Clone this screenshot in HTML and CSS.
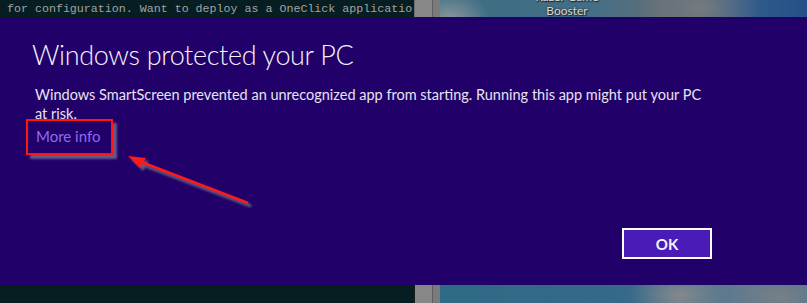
FILE: index.html
```html
<!DOCTYPE html>
<html>
  <head>
    <meta charset="UTF-8">
    <title>Windows protected your PC</title>
    <link rel="stylesheet" href="styles.css">
  </head>
  <body>
    <!-- Terminal + desktop peeking out above the dialog -->
    <div class="strip strip-top">
      <div class="term"><span>for configuration. Want to deploy as a OneClick applicatio</span></div>
      <div class="scroll"><div class="scroll-thumb"></div></div>
      <div class="desktop desktop-top">
        <div class="icon-label">Razer Game<br>Booster</div>
      </div>
    </div>

    <!-- SmartScreen dialog band -->
    <div class="dialog">
      <h1 class="title">Windows protected your PC</h1>
      <p class="message">Windows SmartScreen prevented an unrecognized app from starting. Running this app might put your PC at risk.</p>
      <div class="more-row">
        <a class="more-info" href="#">More info</a>
      </div>
      <div class="actions">
        <button class="ok-btn">OK</button>
      </div>

      <!-- Red annotation arrow -->
      <svg class="arrow" width="807" height="268" viewBox="0 0 807 268">
        <defs>
          <filter id="soft" x="-10%" y="-10%" width="120%" height="120%">
            <feGaussianBlur stdDeviation="1"/>
          </filter>
        </defs>
        <g filter="url(#soft)" fill="#5f5c82" stroke="#5f5c82">
          <line x1="251" y1="189" x2="138" y2="146" stroke-width="3"/>
          <polygon points="131,142 149,144 143,154" stroke="none"/>
        </g>
        <g fill="#ff1a1a" stroke="#ff1a1a">
          <line x1="248" y1="186" x2="136" y2="143" stroke-width="2.5"/>
          <polygon points="128,139 146,141 140,151" stroke="none"/>
        </g>
      </svg>
    </div>

    <div class="strip strip-bottom">
      <div class="term"></div>
      <div class="scroll"><div class="scroll-thumb"></div></div>
      <div class="desktop desktop-bottom"></div>
    </div>
  </body>
</html>
```

FILE: styles.css
```css
body {
  margin: 0;
  width: 807px;
  height: 303px;
  overflow: hidden;
  background-color: #220069;
  font-family: Lato, "Open Sans", sans-serif;
}

/* ---- strips above / below the dialog ---- */
.strip {
  display: flex;
  overflow: hidden;
}
.strip-top {
  height: 17px;
}
.strip-bottom {
  height: 18px;
}
.term {
  width: 414px;
  background-color: #061e22;
  color: #a2a4a4;
  font-family: "Liberation Mono", monospace;
  font-size: 11.65px;
  line-height: 17px;
  white-space: nowrap;
  overflow: hidden;
  padding-left: 7px;
  box-sizing: border-box;
}
.scroll {
  width: 26px;
  display: flex;
  background-color: #7b7b7b;
  border-left: 1px solid #1a1a1a;
  box-sizing: border-box;
}
.scroll-thumb {
  width: 17px;
  border-right: 1px solid #5f5f5f;
  background-color: #878787;
}
.strip-top .scroll {
  border-left-color: #6f6f6f;
}
.desktop {
  flex: 1;
  position: relative;
  overflow: hidden;
}
.desktop-top {
  background:
    radial-gradient(ellipse 40px 30px at 10px 20px, rgba(170, 170, 170, 0.7), transparent),
    radial-gradient(ellipse 60px 40px at 260px 8px, rgba(125, 125, 125, 0.9), transparent),
    linear-gradient(90deg, #3e6d82 0%, #416f87 40%, #606e78 60%, #36608a 78%, #24508a 100%);
}
.desktop-bottom {
  background:
    radial-gradient(ellipse 50px 30px at 240px 10px, rgba(140, 140, 140, 0.9), transparent),
    radial-gradient(ellipse 60px 30px at 340px 12px, rgba(130, 130, 130, 0.8), transparent),
    linear-gradient(90deg, #2f6a86 0%, #36698a 50%, #42708a 65%, #5a7890 80%, #4d7590 100%);
}
.icon-label {
  position: absolute;
  left: 82px;
  top: -10px;
  width: 90px;
  text-align: center;
  color: #d9d9d9;
  font-size: 12px;
  line-height: 14px;
  text-shadow: 0 0 2px #222, 1px 1px 1px #222;
}

/* ---- dialog ---- */
.dialog {
  position: relative;
  height: 268px;
  box-sizing: border-box;
  padding: 21px 95px 0 32px;
  display: flex;
  flex-direction: column;
  color: #f0eef8;
}
.title {
  margin: 0;
  font-size: 27px;
  font-weight: 300;
  letter-spacing: -0.35px;
  line-height: 34px;
  color: #f4f2fa;
}
.message {
  margin: 13px 0 0 3px;
  font-size: 14.5px;
  line-height: 19px;
  color: #e6e3f1;
}
.more-row {
  margin: -4px 0 0 -6px;
  display: flex;
}
.more-info {
  display: inline-block;
  padding: 5px 11px 7px 8px;
  border: 2px solid #ff1212;
  box-shadow: 4px 4px 2px rgba(120, 118, 150, 0.75);
  color: #8a6cf0;
  font-size: 15px;
  line-height: 20px;
  text-decoration: none;
}
.actions {
  display: flex;
  justify-content: flex-end;
  margin-top: auto;
  margin-bottom: 26px;
}
.ok-btn {
  width: 90px;
  height: 31px;
  border: 2px solid #ffffff;
  background-color: #4a1bb7;
  color: #f4f2fa;
  font-family: Lato, "Open Sans", sans-serif;
  font-size: 15px;
  font-weight: bold;
  padding: 0;
}
.arrow {
  position: absolute;
  left: 0;
  top: 0;
  pointer-events: none;
}
```
